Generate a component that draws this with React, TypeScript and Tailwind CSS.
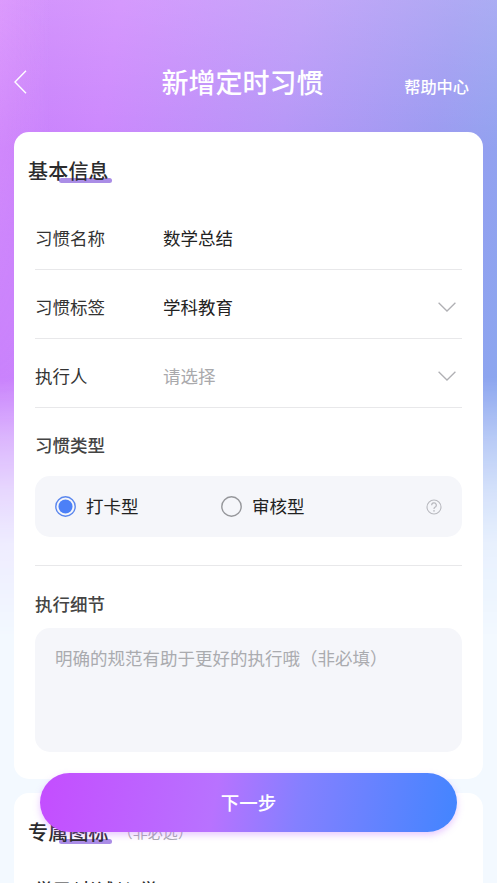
import React from 'react';

// --- Helper Components ---
const ChevronDown = () => (
  <svg width="18" height="10" viewBox="0 0 18 10" fill="none" className="shrink-0">
    <path d="M0.6 0.8L9 9L17.4 0.8" stroke="#b0b0b4" strokeWidth="1.3" />
  </svg>
);

const SectionTitle = ({ text, hint }: { text: string; hint?: string }) => (
  <div className="flex h-[30px] items-center">
    <div className="relative text-[20px] leading-[30px] font-medium tracking-[0.2px]">
      <span className="absolute bottom-[3px] left-[31px] h-[5px] w-[53px] rounded-full bg-[#aa8de6]" />
      <span className="relative">{text}</span>
    </div>
    {hint && <span className="ml-[9px] text-[15px] text-[#a9abb0]">{hint}</span>}
  </div>
);

type FieldRowProps = {
  label: string;
  value: string;
  placeholder?: boolean;
  select?: boolean;
};

const FieldRow = ({ label, value, placeholder, select }: FieldRowProps) => (
  <div className="flex h-[69px] items-center border-b border-[#e8e8ea] pt-[6px] pr-[6px]">
    <span className="w-[128px] text-[#333]">{label}</span>
    <span className={placeholder ? 'flex-1 text-[#a9a9ac]' : 'flex-1 text-[#222]'}>{value}</span>
    {select && <ChevronDown />}
  </div>
);

const RadioOption = ({ label, checked }: { label: string; checked?: boolean }) => (
  <div className="flex w-[166px] items-center gap-[10px]">
    <svg width="21" height="21" viewBox="0 0 21 21" fill="none">
      <circle cx="10.5" cy="10.5" r="9.7" stroke={checked ? '#5b87ee' : '#96979b'} strokeWidth="1.4" />
      {checked && <circle cx="10.5" cy="10.5" r="7" fill="#4c80f7" />}
    </svg>
    <span className="text-[#222]">{label}</span>
  </div>
);

const FIELDS: FieldRowProps[] = [
  { label: '习惯名称', value: '数学总结' },
  { label: '习惯标签', value: '学科教育', select: true },
  { label: '执行人', value: '请选择', placeholder: true, select: true },
];

// --- Main Component ---
export default function App() {
  return (
    <div className="relative h-[883px] w-[497px] overflow-hidden bg-[#f3f9ff] font-['Noto_Sans_CJK_SC',sans-serif] text-[17.5px] text-[#2b2b2d]">
      {/* Header glow fading into the page colour */}
      <div className="absolute inset-x-0 top-0 h-[640px] bg-[linear-gradient(100deg,#c77dfb_0%,#cb86fd_20%,#b595f7_50%,#9b9af1_75%,#85abee_100%)] [mask-image:linear-gradient(180deg,#000_0%,#000_59%,rgba(0,0,0,0.55)_69%,rgba(0,0,0,0.28)_77%,rgba(0,0,0,0.1)_85%,transparent_100%)]" />
      <div className="absolute inset-x-0 top-0 h-[150px] bg-[linear-gradient(180deg,rgba(255,230,255,0.2),transparent)]" />
      <div className="absolute top-0 left-0 h-[400px] w-[50px] bg-[linear-gradient(90deg,rgba(240,170,255,0.35),transparent)] [mask-image:linear-gradient(180deg,#000_0%,transparent_100%)]" />

      <div className="relative">
        <header className="grid h-[132px] grid-cols-[1fr_auto_1fr] items-start pt-[62px] pr-[28px] pl-[14px] text-white">
          <svg width="13" height="24" viewBox="0 0 13 24" fill="none" className="mt-[8px]">
            <path d="M12 0.8L1 12L12 23.2" stroke="white" strokeWidth="1.4" />
          </svg>
          <h1 className="pl-[2px] text-[27px] leading-[40px] font-medium">新增定时习惯</h1>
          <span className="mt-[12px] justify-self-end text-[16.2px] leading-[24px] font-medium">帮助中心</span>
        </header>

        <main className="flex flex-col gap-[14px] px-[14px]">
          <section className="h-[647px] rounded-[15px] bg-white px-[14px] pt-[24px]">
            <SectionTitle text="基本信息" />
            <div className="mx-[7px] pt-[15px]">
              {FIELDS.map((field) => (
                <FieldRow key={field.label} {...field} />
              ))}

              <div className="border-b border-[#e8e8ea] pb-[28px]">
                <div className="flex h-[68px] items-center pt-[6px] font-medium text-[#444]">习惯类型</div>
                <div className="flex h-[61px] items-center rounded-[15px] bg-[#f5f6fa] px-[20px]">
                  <RadioOption label="打卡型" checked />
                  <RadioOption label="审核型" />
                  <svg width="16" height="16" viewBox="0 0 16 16" fill="none" className="ml-auto">
                    <circle cx="8" cy="8" r="7" stroke="#b8b9bf" strokeWidth="1.1" />
                    <path d="M5.7 6.3A2.3 2.3 0 1 1 8.9 8.3Q8 8.7 8 9.9" stroke="#b8b9bf" strokeWidth="1.2" />
                    <circle cx="8" cy="11.9" r="0.8" fill="#b8b9bf" />
                  </svg>
                </div>
              </div>

              <div className="mt-[25px] leading-[26px] font-medium text-[#444]">执行细节</div>
              <div className="mt-[11px] h-[124px] rounded-[15px] bg-[#f5f6fa] px-[20px] pt-[17px] leading-[26px] text-[#aaabaf]">
                明确的规范有助于更好的执行哦（非必填）
              </div>
            </div>
          </section>

          <section className="h-[150px] rounded-[15px] bg-white px-[14px] pt-[24px]">
            <SectionTitle text="专属图标" hint="（非必选）" />
            <div className="mt-[29px] ml-[7px] leading-[26px] font-medium tracking-[0.5px]">学习/考试/入学</div>
          </section>
        </main>
      </div>

      <button className="absolute top-[773px] left-[40px] h-[59px] w-[417px] rounded-full bg-[linear-gradient(100deg,#c44dff_0%,#b872ff_42%,#8480ff_62%,#4285ff_100%)] text-[18.5px] font-medium text-white shadow-[0_3px_7px_rgba(190,100,255,0.35)]">
        下一步
      </button>
    </div>
  );
}
